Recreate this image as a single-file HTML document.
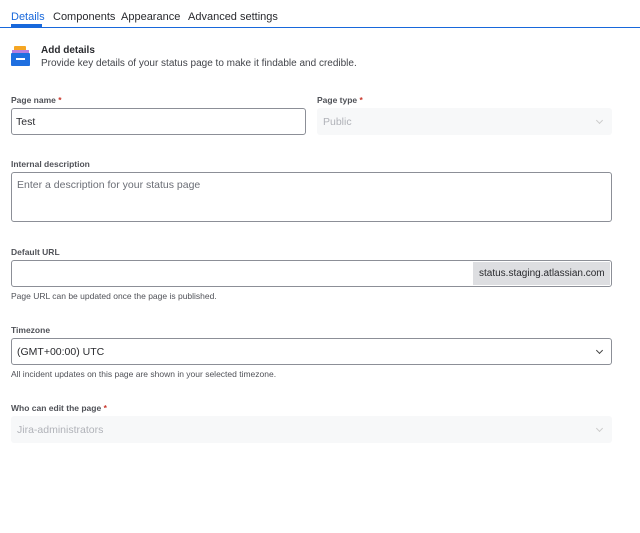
<!DOCTYPE html>
<html><head><style>
*{box-sizing:border-box;margin:0;padding:0}
body{width:640px;height:533px;background:#fff;font-family:"Liberation Sans",sans-serif;color:#292a2e;position:relative;overflow:hidden}
.a{position:absolute}
.tab{font-size:11px;top:11px}
.lbl{font-size:8.5px;font-weight:bold;color:#505258}
.req{color:#c9372c}
.inp{border:1px solid #8c8f97;border-radius:3px;background:#fff}
.dis{background:#f7f8f9;border-radius:3px}
.help{font-size:8.5px;color:#505258}
.chev{width:5px;height:5px;border-right:1px solid #888;border-bottom:1px solid #888;transform:rotate(45deg)}
</style></head><body>
<div class="a tab" style="left:11px;color:#1868db">Details</div>
<div class="a tab" style="left:53px">Components</div>
<div class="a tab" style="left:121px">Appearance</div>
<div class="a tab" style="left:188px">Advanced settings</div>
<div class="a" style="left:11px;top:24px;width:31px;height:3px;background:#1868db"></div>
<div class="a" style="left:0;top:27px;width:640px;height:1px;background:#1868db"></div>

<div class="a" style="left:14px;top:46px;width:12px;height:6px;background:#f5a623;border-radius:1px"></div>
<div class="a" style="left:12px;top:50px;width:17px;height:4px;background:#b57fe0"></div>
<div class="a" style="left:11px;top:53px;width:19px;height:13px;background:#1f6fe0;border-radius:1px"></div>
<div class="a" style="left:16px;top:58px;width:9px;height:2px;background:#fff"></div>
<div class="a" style="left:41px;top:45px;font-size:10px;font-weight:bold">Add details</div>
<div class="a" style="left:41px;top:58px;font-size:10px;color:#42444a">Provide key details of your status page to make it findable and credible.</div>

<div class="a lbl" style="left:11px;top:95px">Page name <span class="req">*</span></div>
<div class="a inp" style="left:11px;top:108px;width:295px;height:27px"></div>
<div class="a" style="left:16px;top:116px;font-size:10.5px">Test</div>
<div class="a lbl" style="left:317px;top:95px">Page type <span class="req">*</span></div>
<div class="a dis" style="left:317px;top:108px;width:295px;height:27px"></div>
<div class="a" style="left:323px;top:116px;font-size:10.5px;color:#b0b2b8">Public</div>
<div class="a chev" style="left:597px;top:118px;border-color:#ccc"></div>

<div class="a lbl" style="left:11px;top:159px">Internal description</div>
<div class="a inp" style="left:11px;top:172px;width:601px;height:50px"></div>
<div class="a" style="left:17px;top:179px;font-size:10.5px;color:#6b6e76">Enter a description for your status page</div>

<div class="a lbl" style="left:11px;top:247px">Default URL</div>
<div class="a inp" style="left:11px;top:260px;width:601px;height:27px"></div>
<div class="a" style="left:473px;top:262px;width:137px;height:23px;background:#dddee1"></div>
<div class="a" style="left:479px;top:268px;font-size:10px">status.staging.atlassian.com</div>
<div class="a help" style="left:11px;top:291px">Page URL can be updated once the page is published.</div>

<div class="a lbl" style="left:11px;top:325px">Timezone</div>
<div class="a inp" style="left:11px;top:338px;width:601px;height:27px"></div>
<div class="a" style="left:17px;top:346px;font-size:10.5px">(GMT+00:00) UTC</div>
<div class="a chev" style="left:597px;top:348px;border-color:#444"></div>
<div class="a help" style="left:11px;top:369px">All incident updates on this page are shown in your selected timezone.</div>

<div class="a lbl" style="left:11px;top:403px">Who can edit the page <span class="req">*</span></div>
<div class="a dis" style="left:11px;top:416px;width:601px;height:27px"></div>
<div class="a" style="left:17px;top:424px;font-size:10.5px;color:#b0b2b8">Jira-administrators</div>
<div class="a chev" style="left:597px;top:426px;border-color:#ccc"></div>
</body></html>
